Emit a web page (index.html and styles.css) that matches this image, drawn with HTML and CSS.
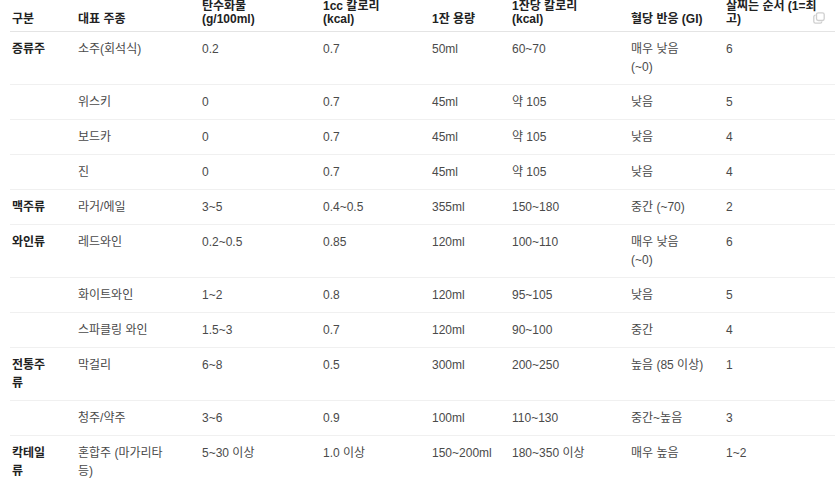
FILE: index.html
```html
<!DOCTYPE html>
<html lang="ko">
<head>
<meta charset="utf-8">
<title>주종별 칼로리</title>
<link rel="stylesheet" href="styles.css">
</head>
<body>
<div class="wrap">
  <table class="drinks">
    <colgroup>
      <col class="c1"><col class="c2"><col class="c3"><col class="c4">
      <col class="c5"><col class="c6"><col class="c7"><col class="c8">
    </colgroup>
    <thead>
      <tr>
        <th>구분</th>
        <th>대표 주종</th>
        <th>탄수화물<br>(g/100ml)</th>
        <th>1cc 칼로리<br>(kcal)</th>
        <th>1잔 용량</th>
        <th>1잔당 칼로리<br>(kcal)</th>
        <th>혈당 반응 (GI)</th>
        <th>살찌는 순서 (1=최<br>고)</th>
      </tr>
    </thead>
    <tbody>
      <tr><td class="cat">증류주</td><td>소주(회석식)</td><td>0.2</td><td>0.7</td><td>50ml</td><td>60~70</td><td>매우 낮음<br>(~0)</td><td>6</td></tr>
      <tr><td class="cat"></td><td>위스키</td><td>0</td><td>0.7</td><td>45ml</td><td>약 105</td><td>낮음</td><td>5</td></tr>
      <tr><td class="cat"></td><td>보드카</td><td>0</td><td>0.7</td><td>45ml</td><td>약 105</td><td>낮음</td><td>4</td></tr>
      <tr><td class="cat"></td><td>진</td><td>0</td><td>0.7</td><td>45ml</td><td>약 105</td><td>낮음</td><td>4</td></tr>
      <tr><td class="cat">맥주류</td><td>라거/에일</td><td>3~5</td><td>0.4~0.5</td><td>355ml</td><td>150~180</td><td>중간 (~70)</td><td>2</td></tr>
      <tr><td class="cat">와인류</td><td>레드와인</td><td>0.2~0.5</td><td>0.85</td><td>120ml</td><td>100~110</td><td>매우 낮음<br>(~0)</td><td>6</td></tr>
      <tr><td class="cat"></td><td>화이트와인</td><td>1~2</td><td>0.8</td><td>120ml</td><td>95~105</td><td>낮음</td><td>5</td></tr>
      <tr><td class="cat"></td><td>스파클링 와인</td><td>1.5~3</td><td>0.7</td><td>120ml</td><td>90~100</td><td>중간</td><td>4</td></tr>
      <tr><td class="cat">전통주<br>류</td><td>막걸리</td><td>6~8</td><td>0.5</td><td>300ml</td><td>200~250</td><td>높음 (85 이상)</td><td>1</td></tr>
      <tr><td class="cat"></td><td>청주/약주</td><td>3~6</td><td>0.9</td><td>100ml</td><td>110~130</td><td>중간~높음</td><td>3</td></tr>
      <tr><td class="cat">칵테일<br>류</td><td>혼합주 (마가리타<br>등)</td><td>5~30 이상</td><td>1.0 이상</td><td>150~200ml</td><td>180~350 이상</td><td>매우 높음</td><td>1~2</td></tr>
    </tbody>
  </table>
  <button class="copy" aria-label="복사">
    <svg width="12" height="12" viewBox="0 0 12 12" fill="none" stroke="#cfcfcf" stroke-width="1.3">
      <rect x="3.5" y="0.8" width="7.7" height="7.7" rx="1.8"/>
      <path d="M2.6 3.2 H2.4 A1.6 1.6 0 0 0 0.8 4.8 V9.6 A1.6 1.6 0 0 0 2.4 11.2 H7.2 A1.6 1.6 0 0 0 8.8 9.6 V9.4"/>
    </svg>
  </button>
</div>
</body>
</html>
```
FILE: styles.css
```css
html, body {
  margin: 0;
  padding: 0;
  background: #ffffff;
}

body {
  font-family: "Liberation Sans", "Noto Sans CJK KR", sans-serif;
  font-size: 12px;
  color: #4a4a4a;
  overflow: hidden;
}

.wrap {
  position: relative;
  padding-left: 10px;
}

.drinks {
  border-collapse: collapse;
  table-layout: fixed;
  width: 825px;
}

.c1 { width: 66px; }
.c2 { width: 124px; }
.c3 { width: 121px; }
.c4 { width: 109px; }
.c5 { width: 80px; }
.c6 { width: 119px; }
.c7 { width: 95px; }
.c8 { width: 111px; }

.drinks th {
  text-align: left;
  vertical-align: bottom;
  font-weight: bold;
  color: #222222;
  line-height: 13px;
  padding: 0 2px 5px 2px;
  border-bottom: 1px solid #e4e4e4;
  white-space: nowrap;
}

.drinks td {
  text-align: left;
  vertical-align: top;
  line-height: 18px;
  padding: 8px 2px 8px 2px;
  border-bottom: 1px solid #f0f0f0;
  white-space: nowrap;
}

.drinks td.cat {
  font-weight: bold;
  color: #222222;
}

.drinks tbody tr:last-child td {
  border-bottom: none;
}

.copy {
  position: absolute;
  top: 12px;
  right: 10px;
  padding: 0;
  margin: 0;
  border: none;
  background: transparent;
  line-height: 0;
}
```
